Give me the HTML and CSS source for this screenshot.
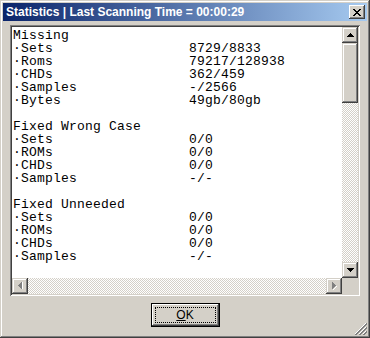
FILE: index.html
```html
<!DOCTYPE html>
<html lang="en">

<head>
    <meta charset="UTF-8">
    <title>Statistics</title>
    <link rel="stylesheet" href="styles.css">
</head>

<body>
    <div class="window">
        <div class="titlebar">
            <span class="title">Statistics | Last Scanning Time = 00:00:29</span>
            <div class="close-btn">
                <svg width="8" height="7" viewBox="0 0 8 7" shape-rendering="crispEdges">
                    <path d="M0 0h2v1h-2zM6 0h2v1h-2zM1 1h2v1h-2zM5 1h2v1h-2zM2 2h4v1h-4zM3 3h2v1h-2zM2 4h4v1h-4zM1 5h2v1h-2zM5 5h2v1h-2zM0 6h2v1h-2zM6 6h2v1h-2z" fill="#000"/>
                </svg>
            </div>
        </div>

        <div class="client">
            <div class="listbox">
                <div class="list-inner">
                    <div class="lines">
                        <div class="head">Missing</div>
                        <div class="row"><span class="label">·Sets</span><span>8729/8833</span></div>
                        <div class="row"><span class="label">·Roms</span><span>79217/128938</span></div>
                        <div class="row"><span class="label">·CHDs</span><span>362/459</span></div>
                        <div class="row"><span class="label">·Samples</span><span>-/2566</span></div>
                        <div class="row"><span class="label">·Bytes</span><span>49gb/80gb</span></div>

                        <div class="head gap">Fixed Wrong Case</div>
                        <div class="row"><span class="label">·Sets</span><span>0/0</span></div>
                        <div class="row"><span class="label">·ROMs</span><span>0/0</span></div>
                        <div class="row"><span class="label">·CHDs</span><span>0/0</span></div>
                        <div class="row"><span class="label">·Samples</span><span>-/-</span></div>

                        <div class="head gap">Fixed Unneeded</div>
                        <div class="row"><span class="label">·Sets</span><span>0/0</span></div>
                        <div class="row"><span class="label">·ROMs</span><span>0/0</span></div>
                        <div class="row"><span class="label">·CHDs</span><span>0/0</span></div>
                        <div class="row"><span class="label">·Samples</span><span>-/-</span></div>
                    </div>

                    <div class="vscroll">
                        <div class="sb-btn">
                            <svg width="7" height="4" viewBox="0 0 7 4" shape-rendering="crispEdges"><path d="M3 0h1v1h1v1h1v1h1v1h-7v-1h1v-1h1v-1h1z" fill="#000"/></svg>
                        </div>
                        <div class="thumb"></div>
                        <div class="track"></div>
                        <div class="sb-btn">
                            <svg width="7" height="4" viewBox="0 0 7 4" shape-rendering="crispEdges"><path d="M0 0h7v1h-1v1h-1v1h-1v1h-1v-1h-1v-1h-1v-1h-1z" fill="#000"/></svg>
                        </div>
                    </div>

                    <div class="hscroll">
                        <div class="sb-btn">
                            <svg width="5" height="8" viewBox="0 0 5 8" shape-rendering="crispEdges"><path d="M4 0v7h-1v-1h-1v-1h-1v-1h-1v-1h1v-1h1v-1h1v-1z" fill="#808080"/><path d="M4 7h1v-7h-1z" fill="#fff"/></svg>
                        </div>
                        <div class="track"></div>
                        <div class="sb-btn">
                            <svg width="5" height="8" viewBox="0 0 5 8" shape-rendering="crispEdges"><path d="M0 0h1v1h1v1h1v1h1v1h-1v1h-1v1h-1v1h-1z" fill="#808080"/><path d="M1 7h1v-1h1v-1h1v-1h1v1h-1v1h-1v1h-1v1h-1z" fill="#fff"/></svg>
                        </div>
                    </div>

                    <div class="corner"></div>
                </div>
            </div>

            <div class="footer">
                <button class="ok-btn"><span class="focus"><u>O</u>K</span></button>
            </div>

            <svg class="grip" width="12" height="12" viewBox="0 0 12 12" shape-rendering="crispEdges">
                <path d="M11 0L0 11" stroke="#fff" stroke-width="1"/>
                <path d="M12 0L0 12M12 1L1 12" stroke="#808080" stroke-width="1"/>
                <path d="M11 4L4 11" stroke="#fff" stroke-width="1"/>
                <path d="M12 4L4 12M12 5L5 12" stroke="#808080" stroke-width="1"/>
                <path d="M11 8L8 11" stroke="#fff" stroke-width="1"/>
                <path d="M12 8L8 12M12 9L9 12" stroke="#808080" stroke-width="1"/>
            </svg>
        </div>
    </div>
</body>

</html>
```

FILE: styles.css
```css
body {
    margin: 0;
    background-color: #d4d0c8;
}

.window {
    width: 370px;
    height: 338px;
    box-sizing: border-box;
    padding: 3px;
    display: flex;
    flex-direction: column;
    background-color: #d4d0c8;
    /* classic raised frame */
    box-shadow: inset -1px -1px #404040, inset 1px 1px #d4d0c8,
                inset -2px -2px #808080, inset 2px 2px #ffffff;
}

.titlebar {
    height: 18px;
    display: flex;
    align-items: center;
    justify-content: space-between;
    padding: 0 2px 0 3px;
    background: linear-gradient(to right, #0a246a, #a6caf0);
}

.title {
    font-family: "Liberation Sans", Arial, sans-serif;
    font-size: 12px;
    font-weight: bold;
    color: #ffffff;
    white-space: nowrap;
}

.close-btn {
    width: 16px;
    height: 14px;
    box-sizing: border-box;
    display: flex;
    align-items: center;
    justify-content: center;
    background-color: #d4d0c8;
    box-shadow: inset -1px -1px #404040, inset 1px 1px #ffffff,
                inset -2px -2px #808080;
}

.client {
    flex: 1;
    position: relative;
    display: flex;
    flex-direction: column;
    padding: 4px 7px 0;
}

.listbox {
    height: 271px;
    box-sizing: border-box;
    padding: 2px;
    background-color: #ffffff;
    box-shadow: inset 1px 1px #808080, inset -1px -1px #ffffff,
                inset 2px 2px #404040, inset -2px -2px #d4d0c8;
}

.list-inner {
    height: 100%;
    display: grid;
    grid-template-columns: 1fr 16px;
    grid-template-rows: 1fr 16px;
    overflow: hidden;
}

.lines {
    padding: 2px 0 0 1px;
    font-family: "Liberation Mono", "Courier New", monospace;
    font-size: 13px;
    letter-spacing: 0.2px;
    line-height: 13px;
    color: #000000;
    white-space: nowrap;
    overflow: hidden;
}

.gap {
    margin-top: 13px;
}

.row {
    display: grid;
    grid-template-columns: 176px auto;
}

.vscroll {
    display: flex;
    flex-direction: column;
}

.hscroll {
    display: flex;
}

.sb-btn {
    width: 16px;
    height: 16px;
    flex: none;
    box-sizing: border-box;
    display: flex;
    align-items: center;
    justify-content: center;
    background-color: #d4d0c8;
    box-shadow: inset -1px -1px #404040, inset 1px 1px #d4d0c8,
                inset -2px -2px #808080, inset 2px 2px #ffffff;
}

.thumb {
    height: 60px;
    flex: none;
    background-color: #d4d0c8;
    box-shadow: inset -1px -1px #404040, inset 1px 1px #d4d0c8,
                inset -2px -2px #808080, inset 2px 2px #ffffff;
}

.track {
    flex: 1;
    background-image: conic-gradient(#ffffff 25%, #d4d0c8 0 50%, #ffffff 0 75%, #d4d0c8 0);
    background-size: 2px 2px;
}

.corner {
    background-color: #d4d0c8;
}

.footer {
    display: flex;
    justify-content: center;
    margin-top: 7px;
}

.ok-btn {
    width: 69px;
    height: 24px;
    padding: 4px;
    border: 1px solid #000000;
    background-color: #d4d0c8;
    font-family: "Liberation Sans", Arial, sans-serif;
    font-size: 12px;
    color: #000000;
    box-shadow: inset -1px -1px #404040, inset 1px 1px #ffffff,
                inset -2px -2px #808080;
}

.focus {
    display: flex;
    align-items: center;
    justify-content: center;
    height: 100%;
    outline: 1px dotted #000000;
}

.grip {
    position: absolute;
    right: 0;
    bottom: 0;
}
```
